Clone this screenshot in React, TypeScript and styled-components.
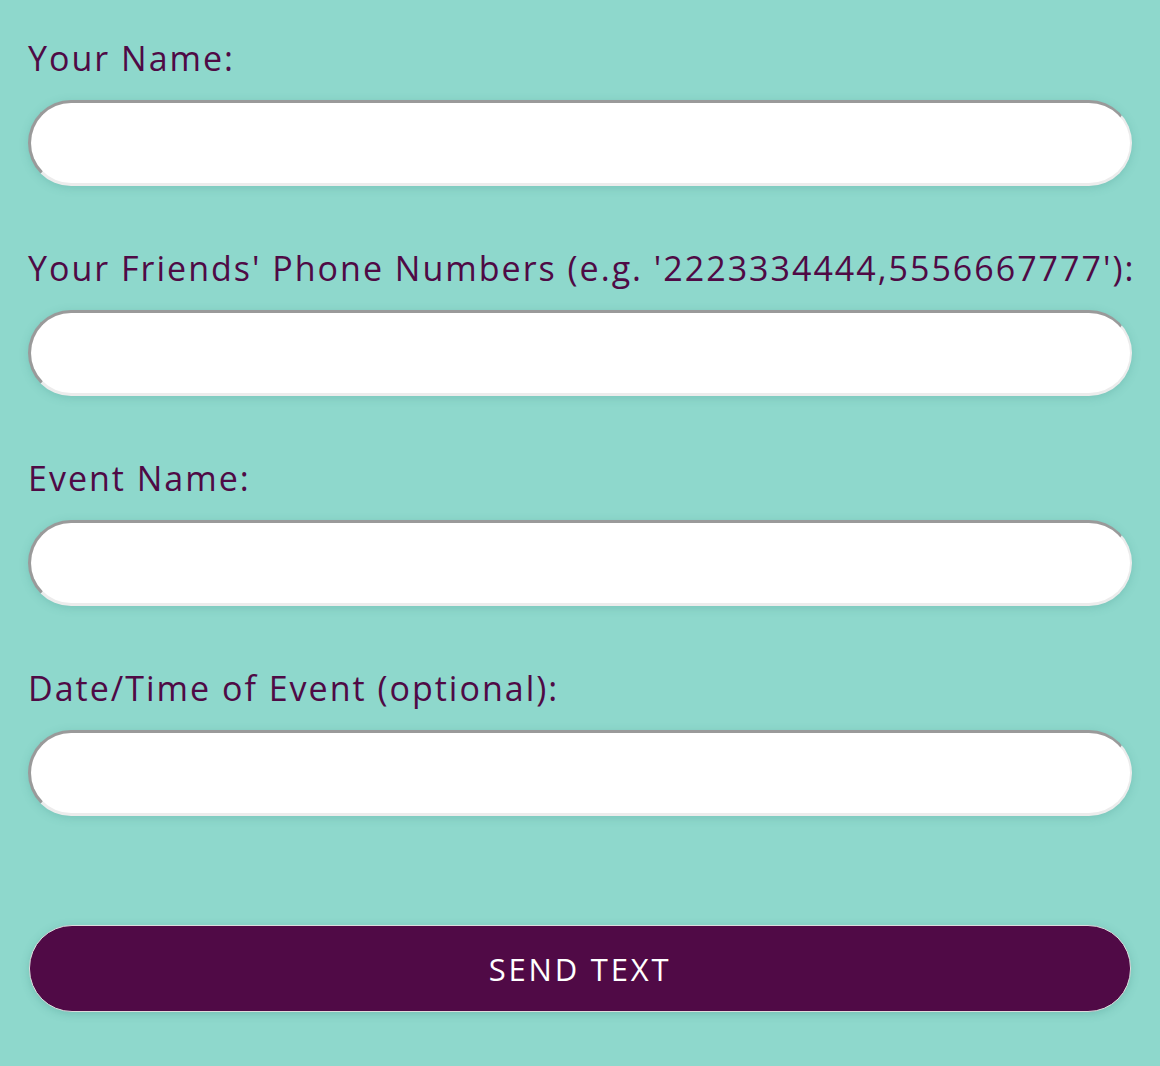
import React from "react";
import styled, { createGlobalStyle } from "styled-components";

const GlobalStyle = createGlobalStyle`
  html, body {
    margin: 0;
    padding: 0;
    background: #8ed8cc;
  }
  body {
    font-family: "Open Sans", "Liberation Sans", sans-serif;
  }
`;

const Page = styled.div`
  min-height: 1066px;
  background: #8ed8cc;
  padding: 34px 28px 0 28px;
  box-sizing: border-box;
`;

const Form = styled.form`
  display: flex;
  flex-direction: column;
`;

const Field = styled.div`
  display: flex;
  flex-direction: column;
  gap: 18px;
  margin-bottom: 58px;
`;

const Label = styled.label`
  font-family: "Open Sans", "Liberation Sans", sans-serif;
  font-size: 34px;
  font-weight: 500;
  line-height: 48px;
  letter-spacing: 2px;
  color: #4f0a45;
  white-space: nowrap;
`;

const Input = styled.input`
  display: block;
  box-sizing: border-box;
  width: 100%;
  height: 86px;
  border-radius: 43px;
  border-width: 3px 2px 3px 3px;
  border-style: solid;
  border-color: #9a9a9a #ececec #ececec #9a9a9a;
  background: #ffffff;
  box-shadow: 0 2px 8px rgba(60, 140, 130, 0.25);
  padding: 0 40px;
  font-size: 30px;
  outline: none;
`;

const Button = styled.button`
  display: block;
  box-sizing: border-box;
  width: calc(100% - 2px);
  margin: 51px 1px 0 1px;
  height: 87px;
  border-radius: 43px;
  border: 1.5px solid #dcdcdc;
  background: #500a46;
  color: #ffffff;
  font-family: "Open Sans", "Liberation Sans", sans-serif;
  font-size: 31px;
  font-weight: 500;
  letter-spacing: 2.8px;
  box-shadow: 0 2px 8px rgba(60, 140, 130, 0.3);
  cursor: pointer;
`;

const fields = [
  "Your Name:",
  "Your Friends' Phone Numbers (e.g. '2223334444,5556667777'):",
  "Event Name:",
  "Date/Time of Event (optional):",
];

export default function App() {
  return (
    <>
      <GlobalStyle />
      <Page>
        <Form onSubmit={(e) => e.preventDefault()}>
          {fields.map((f, i) => (
            <Field key={i}>
              <Label htmlFor={`f${i}`}>{f}</Label>
              <Input id={`f${i}`} type="text" />
            </Field>
          ))}
          <Button type="submit">SEND TEXT</Button>
        </Form>
      </Page>
    </>
  );
}
